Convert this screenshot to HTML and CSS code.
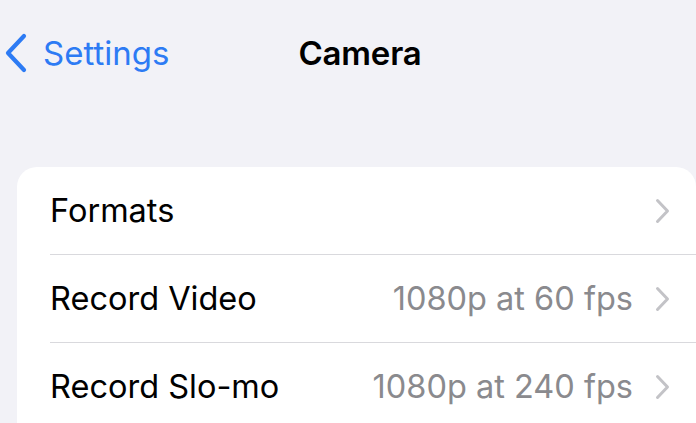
FILE: index.html
```html
<!DOCTYPE html>
<html lang="en">
<head>
    <meta charset="UTF-8" />
    <meta name="viewport" content="width=device-width, initial-scale=1.0" />
    <title>Camera</title>
    <link rel="stylesheet" href="styles.css">
</head>
<body>
    <div class="nav">
      <a class="back" href="#">
        <svg class="back-icon" width="24" height="40" viewBox="0 0 24 40">
          <polyline points="20,3 4,20 20,37" fill="none" stroke="currentColor" stroke-width="4.2" stroke-linecap="round" stroke-linejoin="round" />
        </svg>
        <span>Settings</span>
      </a>
      <div class="title">Camera</div>
    </div>

    <div class="card">
      <div class="row">
        <span class="label">Formats</span>
        <span class="value"></span>
        <svg class="chev" width="15" height="26" viewBox="0 0 15 26">
          <polyline points="2.5,2.5 12.5,13 2.5,23.5" fill="none" stroke="currentColor" stroke-width="3" stroke-linecap="round" stroke-linejoin="round" />
        </svg>
      </div>
      <div class="row">
        <span class="label">Record Video</span>
        <span class="value">1080p at 60 fps</span>
        <svg class="chev" width="15" height="26" viewBox="0 0 15 26">
          <polyline points="2.5,2.5 12.5,13 2.5,23.5" fill="none" stroke="currentColor" stroke-width="3" stroke-linecap="round" stroke-linejoin="round" />
        </svg>
      </div>
      <div class="row">
        <span class="label">Record Slo-mo</span>
        <span class="value">1080p at 240 fps</span>
        <svg class="chev" width="15" height="26" viewBox="0 0 15 26">
          <polyline points="2.5,2.5 12.5,13 2.5,23.5" fill="none" stroke="currentColor" stroke-width="3" stroke-linecap="round" stroke-linejoin="round" />
        </svg>
      </div>
    </div>
</body>
</html>
```

FILE: styles.css
```css
body {
  margin: 0;
  background-color: #f2f2f7;
  font-family: Inter, "Noto Sans", sans-serif;
  color: #000;
  overflow: hidden;
}
.nav {
  position: relative;
  height: 108px;
}
.back {
  position: absolute;
  left: 4px;
  top: 33px;
  display: flex;
  align-items: center;
  gap: 15px;
  color: #2d7bf4;
  text-decoration: none;
  font-size: 33px;
}
.title {
  text-align: center;
  padding-top: 33px;
  padding-left: 24px;
  font-size: 33px;
  font-weight: 600;
  letter-spacing: -0.2px;
}
.card {
  margin: 59px 0 0 17px;
  background-color: #fff;
  border-radius: 20px 20px 0 0;
  padding-left: 33px;
}
.row {
  display: flex;
  align-items: center;
  height: 87px;
  border-bottom: 1px solid #d9d9dd;
  padding-right: 26px;
  font-size: 32.5px;
}
.label {
  flex: 1;
}
.value {
  color: #8a8a8e;
  margin-right: 22px;
}
.chev {
  color: #c3c3c7;
}
```
